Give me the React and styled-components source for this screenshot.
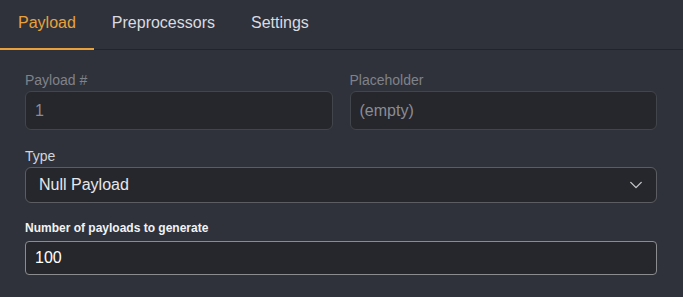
import React from 'react'
import styled, { createGlobalStyle } from 'styled-components'

const GlobalStyle = createGlobalStyle`
    body {
        margin: 0;
        background: #2f323a;
        font-family: "Liberation Sans", Arial, sans-serif;
    }
`

function Chevron() {
    return (
        <svg width="14" height="14" viewBox="0 0 16 16" fill="none">
            <path d="M2 5l6 6 6-6" stroke="#c4c6ca" strokeWidth="1.6" strokeLinecap="round" strokeLinejoin="round" />
        </svg>
    )
}

function App() {
    return (
        <>
            <GlobalStyle />
            <Panel>
                <TabBar>
                    <Tab active>Payload</Tab>
                    <Tab>Preprocessors</Tab>
                    <Tab>Settings</Tab>
                </TabBar>
                <Content>
                    <Row>
                        <Field>
                            <Label disabled>Payload #</Label>
                            <Input disabled>1</Input>
                        </Field>
                        <Field>
                            <Label disabled>Placeholder</Label>
                            <Input disabled>(empty)</Input>
                        </Field>
                    </Row>
                    <Field>
                        <Label>Type</Label>
                        <Select>
                            <span>Null Payload</span>
                            <Chevron />
                        </Select>
                    </Field>
                    <Field>
                        <Label strong>Number of payloads to generate</Label>
                        <NumberInput>100</NumberInput>
                    </Field>
                </Content>
            </Panel>
        </>
    )
}

const Panel = styled.div`
    width: 683px;
    height: 297px;
    background: #2f323a;
`

const TabBar = styled.div`
    display: flex;
    height: 49px;
    border-bottom: 1px solid #22242a;
`

const Tab = styled.div`
    display: flex;
    align-items: center;
    padding: 0 18px 3px;
    font-size: 16px;
    color: ${p => (p.active ? '#e9a23b' : '#d9dbe0')};
    border-bottom: 2px solid ${p => (p.active ? '#e9a23b' : 'transparent')};
    margin-bottom: -1px;
`

const Content = styled.div`
    display: flex;
    flex-direction: column;
    gap: 17px;
    padding: 22px 26px 0 25px;
`

const Row = styled.div`
    display: grid;
    grid-template-columns: 1fr 1fr;
    gap: 17px;
    margin-bottom: 1px;
`

const Field = styled.div`
    display: flex;
    flex-direction: column;
`

const Label = styled.div`
    font-size: ${p => (p.strong ? '12px' : '14px')};
    font-weight: ${p => (p.strong ? 700 : 400)};
    line-height: 17px;
    margin-bottom: ${p => (p.strong ? '4px' : '2px')};
    color: ${p => (p.disabled ? '#7f828a' : p.strong ? '#f2f3f5' : '#d2d4d8')};
`

const Input = styled.div`
    display: flex;
    align-items: center;
    height: 39px;
    box-sizing: border-box;
    padding: 0 9px;
    font-size: 16px;
    color: ${p => (p.disabled ? '#8a8d95' : '#ffffff')};
    background: #26272d;
    border: 1px solid #43454c;
    border-radius: 6px;
`

const Select = styled(Input)`
    justify-content: space-between;
    height: 36px;
    padding: 0 13px 0 13px;
    color: #e6e7ea;
    border-color: #5b5d63;
`

const NumberInput = styled(Input)`
    height: 34px;
    padding: 0 9px;
    color: #ffffff;
    border-color: #8b8c90;
    border-radius: 4px;
`

export default App
